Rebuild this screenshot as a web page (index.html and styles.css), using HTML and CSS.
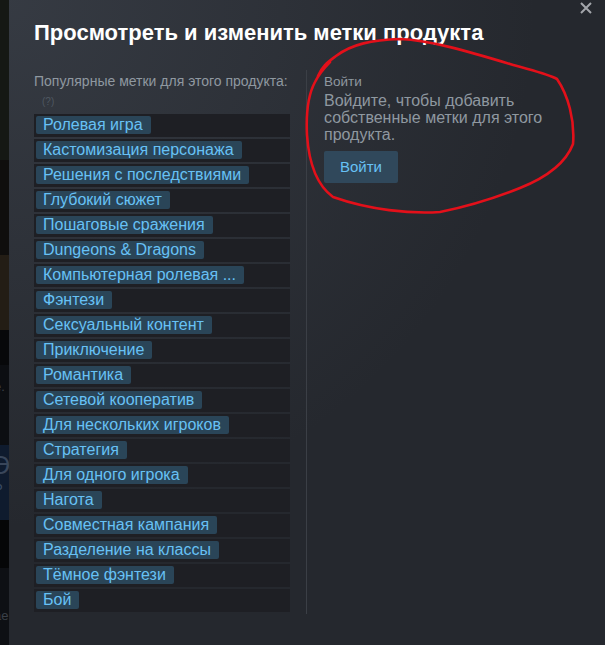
FILE: index.html
```html
<!DOCTYPE html>
<html lang="ru">
<head>
  <meta charset="UTF-8" />
  <title>Метки продукта</title>
  <link rel="stylesheet" href="styles.css">
</head>
<body>
  <div class="screen">
    <!-- dimmed store page behind the dialog -->
    <div class="backdrop">
      <div class="bd bd-1"></div>
      <div class="bd bd-2"></div>
      <div class="bd bd-3"></div>
      <div class="bd bd-4"></div>
      <div class="bd bd-5"><span class="bd-text">е.</span></div>
      <div class="bd bd-6"><span class="bd-big">Ө</span><span class="bd-text">Р</span></div>
      <div class="bd bd-7"></div>
      <div class="bd bd-8"><span class="bd-text">ае</span></div>
    </div>

    <div class="modal">
      <svg class="close-btn" width="14" height="14" viewBox="0 0 14 14">
        <path d="M2 2 L12 12 M12 2 L2 12" stroke="#a3a6ab" stroke-width="2" fill="none"/>
      </svg>

      <h2 class="modal-title">Просмотреть и изменить метки продукта</h2>

      <div class="modal-body">
        <div class="tags-col">
          <div class="col-label">Популярные метки для этого продукта:</div>
          <div class="help">(?)</div>
          <div class="tag-list">
            <div class="tag-row"><span class="tag">Ролевая игра</span></div>
            <div class="tag-row"><span class="tag">Кастомизация персонажа</span></div>
            <div class="tag-row"><span class="tag">Решения с последствиями</span></div>
            <div class="tag-row"><span class="tag">Глубокий сюжет</span></div>
            <div class="tag-row"><span class="tag">Пошаговые сражения</span></div>
            <div class="tag-row"><span class="tag">Dungeons &amp; Dragons</span></div>
            <div class="tag-row"><span class="tag">Компьютерная ролевая ...</span></div>
            <div class="tag-row"><span class="tag">Фэнтези</span></div>
            <div class="tag-row"><span class="tag">Сексуальный контент</span></div>
            <div class="tag-row"><span class="tag">Приключение</span></div>
            <div class="tag-row"><span class="tag">Романтика</span></div>
            <div class="tag-row"><span class="tag">Сетевой кооператив</span></div>
            <div class="tag-row"><span class="tag">Для нескольких игроков</span></div>
            <div class="tag-row"><span class="tag">Стратегия</span></div>
            <div class="tag-row"><span class="tag">Для одного игрока</span></div>
            <div class="tag-row"><span class="tag">Нагота</span></div>
            <div class="tag-row"><span class="tag">Совместная кампания</span></div>
            <div class="tag-row"><span class="tag">Разделение на классы</span></div>
            <div class="tag-row"><span class="tag">Тёмное фэнтези</span></div>
            <div class="tag-row"><span class="tag">Бой</span></div>
          </div>
        </div>

        <div class="login-col">
          <div class="col-label">Войти</div>
          <p class="login-text">Войдите, чтобы добавить собственные метки для этого продукта.</p>
          <a class="btn">Войти</a>
        </div>
      </div>

      <!-- red hand-drawn annotation over the login block -->
      <svg class="scribble" width="605" height="645" viewBox="0 0 605 645">
        <path d="M318 76 C 322 66, 328 62, 336 56 C 352 44, 372 40, 400 39 C 430 40, 470 52, 510 64 C 530 70, 548 74, 557 79 C 568 95, 575 120, 573 144 C 565 165, 545 178, 520 188 C 495 198, 465 207, 440 212 C 410 214, 370 210, 333 197 C 318 186, 309 165, 307 135 C 306 115, 308 95, 315 82 C 320 72, 326 66, 330 62"
              stroke="#e3101a" stroke-width="2.6" fill="none" stroke-linecap="round" stroke-linejoin="round"/>
      </svg>
    </div>
  </div>
</body>
</html>
```

FILE: styles.css
```css
* { margin: 0; padding: 0; box-sizing: border-box; }
body { font-family: "Liberation Sans", Arial, sans-serif; background: #25282e; overflow: hidden; }

.screen {
  display: flex;
  width: 605px;
  height: 645px;
}

/* --- dimmed page behind the dialog --- */
.backdrop {
  width: 9px;
  display: flex;
  flex-direction: column;
  overflow: hidden;
}

.bd { position: relative; overflow: hidden; }
.bd-1 { height: 160px; background: #151814; }
.bd-2 { height: 95px; background: #0f0e0d; }
.bd-3 { height: 75px; background: #231d15; }
.bd-4 { height: 35px; background: #07080a; }
.bd-5 { height: 80px; background: #0c0e12; }
.bd-6 { height: 75px; background: #0f1b2e; }
.bd-7 { height: 48px; background: #050607; }
.bd-8 { flex: 1; background: #0e1014; }

.bd-text {
  display: block;
  font-size: 13px;
  color: #3b4048;
  margin-left: -6px;
  margin-top: 14px;
}

.bd-6 .bd-big {
  display: block;
  font-size: 26px;
  color: #39465a;
  margin-left: -10px;
  margin-top: 6px;
  line-height: 28px;
}

.bd-6 .bd-text { margin-top: 2px; color: #3c4d66; }
.bd-8 .bd-text { margin-top: 40px; }

/* --- dialog --- */
.modal {
  flex: 1;
  position: relative;
  background: radial-gradient(circle at top left, rgba(74, 81, 92, 0.45) 0%, rgba(75, 81, 92, 0) 60%), #25282e;
  padding: 20px 0 0 25px;
}

.close-btn {
  position: absolute;
  top: 1px;
  right: 12px;
}

.modal-title {
  color: #fff;
  font-size: 22px;
  font-weight: bold;
  line-height: 26px;
  margin-bottom: 24px;
}

.modal-body {
  display: flex;
}

.tags-col {
  width: 256px;
  padding-top: 3px;
}

.col-label {
  font-size: 13.5px;
  color: #8f98a0;
  line-height: 17px;
}

.tags-col .col-label {
  font-size: 14px;
}

.help {
  font-size: 10px;
  color: #4f5761;
  line-height: 12px;
  margin: 6px 0 6px 8px;
}

.tag-row {
  height: 23px;
  margin-bottom: 2px;
  background: #1e1f24;
  padding: 2px 0 0 2px;
}

.tag {
  display: inline-block;
  height: 18px;
  line-height: 18px;
  padding: 0 8px 0 7px;
  font-size: 16px;
  color: #67c1f5;
  background: #2a4558;
  border-radius: 2px;
  white-space: nowrap;
}

.login-col {
  margin-left: 16px;
  border-left: 1px solid #3b3f46;
  padding: 3px 0 0 17px;
  width: 270px;
}

.login-text {
  font-size: 16px;
  line-height: 17px;
  color: #8f98a0;
  margin-top: 2px;
  width: 250px;
}

.btn {
  display: inline-block;
  margin-top: 8px;
  height: 32px;
  line-height: 32px;
  padding: 0 16px;
  font-size: 15px;
  color: #67c1f5;
  background: #30485b;
  border-radius: 2px;
  cursor: pointer;
}

/* --- annotation --- */
.scribble {
  position: absolute;
  left: -9px;
  top: 0;
  pointer-events: none;
}
```
